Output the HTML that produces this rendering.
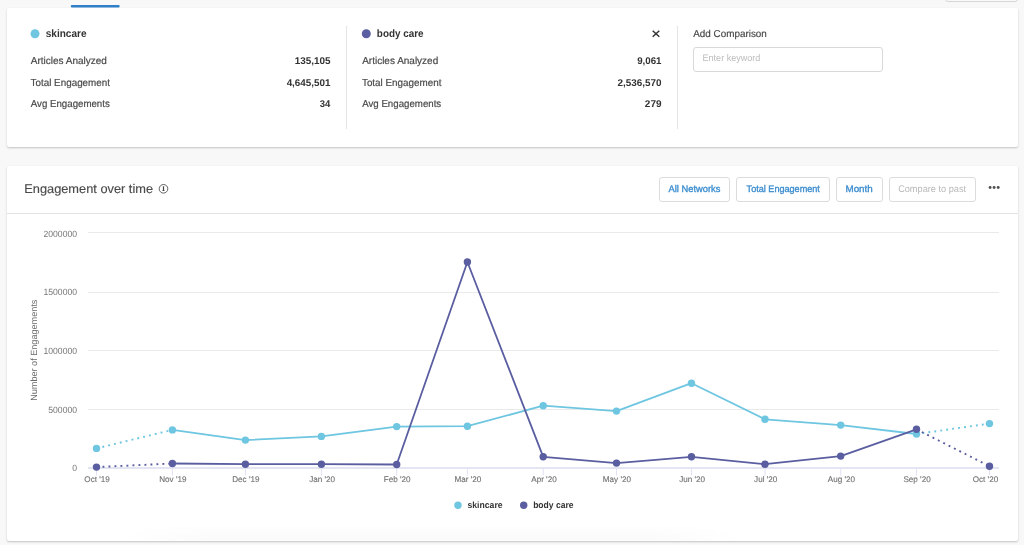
<!DOCTYPE html>
<html>
<head>
<meta charset="utf-8">
<style>
html,body{margin:0;padding:0;}
body{width:1024px;height:545px;overflow:hidden;background:#f8f8f8;position:relative;font-family:"Liberation Sans",sans-serif;}
.card{position:absolute;left:7px;width:1011px;background:#fff;border-radius:2px;box-shadow:0 1px 2px rgba(0,0,0,0.22);}
#c1{top:8px;height:139px;}
#c2{top:166px;height:375px;}
#tab{position:absolute;left:71px;top:5px;width:49px;height:2px;background:#2f7fc6;border-radius:1px;}
#topbtn{position:absolute;left:945px;top:-24px;width:71px;height:24px;border:1px solid #d6d6d6;border-radius:3px;background:#f9f9f9;}
.btn{position:absolute;top:177px;height:25px;border:1px solid #dcdcdc;border-radius:3px;background:#fff;box-sizing:border-box;}
#inp{position:absolute;left:693px;top:47px;width:190px;height:25px;border:1px solid #d9d9d9;border-radius:3px;box-sizing:border-box;background:#fff;}
#hdrline{position:absolute;left:7px;top:213px;width:1011px;height:1px;background:#e3e3e3;}
svg{position:absolute;left:0;top:0;will-change:transform;}
text{font-family:"Liberation Sans",sans-serif;text-rendering:geometricPrecision;}
</style>
</head>
<body>
<div id="topbtn"></div>
<div class="card" id="c1"></div>
<div class="card" id="c2"></div>
<div id="inp"></div>
<div id="hdrline"></div>
<div style="position:absolute;left:120px;top:525px;width:620px;height:15px;background:linear-gradient(to bottom,rgba(0,0,0,0),rgba(0,0,0,0.018));-webkit-mask-image:linear-gradient(to right,transparent,#000 15%,#000 85%,transparent);"></div>
<div class="btn" style="left:659px;width:71px;"></div>
<div class="btn" style="left:736px;width:94px;"></div>
<div class="btn" style="left:836px;width:47px;"></div>
<div class="btn" style="left:889px;width:87px;"></div>
<svg width="1024" height="545" viewBox="0 0 1024 545">
<rect x="70.8" y="5.1" width="48.8" height="2.4" rx="1" fill="#2f80c8"/>
<circle cx="35" cy="33.8" r="4.5" fill="#6ec6e1"/>
<circle cx="366.3" cy="33.8" r="4.5" fill="#5a5ea0"/>
<rect x="346" y="26" width="1" height="103" fill="#e5e5e5"/>
<rect x="677" y="26" width="1" height="103" fill="#e5e5e5"/>
<path d="M652.7 30.7 L659.3 36.8 M659.3 30.7 L652.7 36.8" stroke="#333" stroke-width="1.5" fill="none"/>
<circle cx="163.5" cy="188.8" r="4.3" fill="none" stroke="#585858" stroke-width="0.95"/>
<path d="M162.9 186.3 H164.1 V190.2 H164.6 V191.1 H162.4 V190.2 H162.9 Z" fill="#444"/>
<g fill="#505050"><circle cx="990.1" cy="187.5" r="1.45"/><circle cx="994.1" cy="187.5" r="1.45"/><circle cx="998.2" cy="187.5" r="1.45"/></g>
<g fill="#eaeaea"><rect x="88" y="232" width="911" height="1"/><rect x="88" y="292" width="911" height="1"/><rect x="88" y="350" width="911" height="1"/><rect x="88" y="409" width="911" height="1"/></g>
<rect x="88" y="467" width="911" height="2" fill="#e3e6f2"/>
<g fill="#dfe2f1"><rect x="96.0" y="469" width="1" height="6.5"/><rect x="171.9" y="469" width="1" height="6.5"/><rect x="244.9" y="469" width="1" height="6.5"/><rect x="320.9" y="469" width="1" height="6.5"/><rect x="396.2" y="469" width="1" height="6.5"/><rect x="466.9" y="469" width="1" height="6.5"/><rect x="542.7" y="469" width="1" height="6.5"/><rect x="616.0" y="469" width="1" height="6.5"/><rect x="691.0" y="469" width="1" height="6.5"/><rect x="764.5" y="469" width="1" height="6.5"/><rect x="840.2" y="469" width="1" height="6.5"/><rect x="916.0" y="469" width="1" height="6.5"/><rect x="989.0" y="469" width="1" height="6.5"/></g>
<text x="45.75" y="36.9" font-size="10.8" font-weight="bold" fill="#333" textLength="40.79" lengthAdjust="spacingAndGlyphs">skincare</text><text x="30.78" y="63.8" font-size="10.2" fill="#4a4a4a" stroke="#4a4a4a" stroke-width="0.2" textLength="76.05" lengthAdjust="spacingAndGlyphs">Articles Analyzed</text><text x="362.18" y="63.8" font-size="10.2" fill="#4a4a4a" stroke="#4a4a4a" stroke-width="0.2" textLength="76.05" lengthAdjust="spacingAndGlyphs">Articles Analyzed</text><text x="30.58" y="85.6" font-size="10.2" fill="#4a4a4a" stroke="#4a4a4a" stroke-width="0.2" textLength="79.41" lengthAdjust="spacingAndGlyphs">Total Engagement</text><text x="361.98" y="85.6" font-size="10.2" fill="#4a4a4a" stroke="#4a4a4a" stroke-width="0.2" textLength="79.41" lengthAdjust="spacingAndGlyphs">Total Engagement</text><text x="30.78" y="106.8" font-size="10.2" fill="#4a4a4a" stroke="#4a4a4a" stroke-width="0.2" textLength="79.05" lengthAdjust="spacingAndGlyphs">Avg Engagements</text><text x="362.18" y="106.8" font-size="10.2" fill="#4a4a4a" stroke="#4a4a4a" stroke-width="0.2" textLength="79.05" lengthAdjust="spacingAndGlyphs">Avg Engagements</text><text x="294.68" y="63.8" font-size="9.8" font-weight="bold" fill="#333" textLength="35.82" lengthAdjust="spacingAndGlyphs">135,105</text><text x="286.65" y="85.6" font-size="9.8" font-weight="bold" fill="#333" textLength="43.83" lengthAdjust="spacingAndGlyphs">4,645,501</text><text x="319.70" y="106.8" font-size="9.8" font-weight="bold" fill="#333" textLength="10.57" lengthAdjust="spacingAndGlyphs">34</text><text x="376.86" y="36.9" font-size="10.8" font-weight="bold" fill="#333" textLength="46.68" lengthAdjust="spacingAndGlyphs">body care</text><text x="637.16" y="63.8" font-size="9.8" font-weight="bold" fill="#333" textLength="24.31" lengthAdjust="spacingAndGlyphs">9,061</text><text x="617.55" y="85.6" font-size="9.8" font-weight="bold" fill="#333" textLength="44.06" lengthAdjust="spacingAndGlyphs">2,536,570</text><text x="644.85" y="106.8" font-size="9.8" font-weight="bold" fill="#333" textLength="16.71" lengthAdjust="spacingAndGlyphs">279</text><text x="693.28" y="36.9" font-size="10" fill="#454545" stroke="#454545" stroke-width="0.15" textLength="73.55" lengthAdjust="spacingAndGlyphs">Add Comparison</text><text x="702.55" y="61.1" font-size="9.5" fill="#bcbcbc" textLength="57.83" lengthAdjust="spacingAndGlyphs">Enter keyword</text><text x="24.24" y="193.3" font-size="12.6" fill="#4a4a4a" stroke="#4a4a4a" stroke-width="0.15" textLength="128.82" lengthAdjust="spacingAndGlyphs">Engagement over time</text><text x="668.58" y="191.9" font-size="9.6" fill="#3d8ecf" stroke="#3d8ecf" stroke-width="0.35" textLength="51.84" lengthAdjust="spacingAndGlyphs">All Networks</text><text x="746.60" y="191.9" font-size="9.6" fill="#3d8ecf" stroke="#3d8ecf" stroke-width="0.35" textLength="73.28" lengthAdjust="spacingAndGlyphs">Total Engagement</text><text x="845.49" y="191.9" font-size="9.6" fill="#3d8ecf" stroke="#3d8ecf" stroke-width="0.35" textLength="27.24" lengthAdjust="spacingAndGlyphs">Month</text><text x="898.14" y="191.9" font-size="9.6" fill="#b8b8b8" textLength="67.93" lengthAdjust="spacingAndGlyphs">Compare to past</text><text x="43.47" y="236.74" font-size="9.0" fill="#777" textLength="33.56" lengthAdjust="spacingAndGlyphs">2000000</text><text x="43.47" y="295.34" font-size="9.0" fill="#777" textLength="33.56" lengthAdjust="spacingAndGlyphs">1500000</text><text x="43.47" y="353.99" font-size="9.0" fill="#777" textLength="33.56" lengthAdjust="spacingAndGlyphs">1000000</text><text x="48.27" y="412.54" font-size="9.0" fill="#777" textLength="28.77" lengthAdjust="spacingAndGlyphs">500000</text><text x="72.24" y="471.49" font-size="9.0" fill="#777" textLength="4.79" lengthAdjust="spacingAndGlyphs">0</text><text x="84.36" y="481.8" font-size="8.2" fill="#707070" stroke="#707070" stroke-width="0.12" textLength="25.46" lengthAdjust="spacingAndGlyphs">Oct '19</text><text x="159.22" y="481.8" font-size="8.2" fill="#707070" stroke="#707070" stroke-width="0.12" textLength="27.27" lengthAdjust="spacingAndGlyphs">Nov '19</text><text x="232.22" y="481.8" font-size="8.2" fill="#707070" stroke="#707070" stroke-width="0.12" textLength="27.27" lengthAdjust="spacingAndGlyphs">Dec '19</text><text x="309.13" y="481.8" font-size="8.2" fill="#707070" stroke="#707070" stroke-width="0.12" textLength="25.92" lengthAdjust="spacingAndGlyphs">Jan '20</text><text x="383.71" y="481.8" font-size="8.2" fill="#707070" stroke="#707070" stroke-width="0.12" textLength="26.82" lengthAdjust="spacingAndGlyphs">Feb '20</text><text x="454.41" y="481.8" font-size="8.2" fill="#707070" stroke="#707070" stroke-width="0.12" textLength="26.82" lengthAdjust="spacingAndGlyphs">Mar '20</text><text x="531.22" y="481.8" font-size="8.2" fill="#707070" stroke="#707070" stroke-width="0.12" textLength="25.47" lengthAdjust="spacingAndGlyphs">Apr '20</text><text x="602.83" y="481.8" font-size="8.2" fill="#707070" stroke="#707070" stroke-width="0.12" textLength="28.17" lengthAdjust="spacingAndGlyphs">May '20</text><text x="679.23" y="481.8" font-size="8.2" fill="#707070" stroke="#707070" stroke-width="0.12" textLength="25.92" lengthAdjust="spacingAndGlyphs">Jun '20</text><text x="754.09" y="481.8" font-size="8.2" fill="#707070" stroke="#707070" stroke-width="0.12" textLength="23.21" lengthAdjust="spacingAndGlyphs">Jul '20</text><text x="827.80" y="481.8" font-size="8.2" fill="#707070" stroke="#707070" stroke-width="0.12" textLength="27.28" lengthAdjust="spacingAndGlyphs">Aug '20</text><text x="903.43" y="481.8" font-size="8.2" fill="#707070" stroke="#707070" stroke-width="0.12" textLength="27.28" lengthAdjust="spacingAndGlyphs">Sep '20</text><text x="972.73" y="481.8" font-size="8.2" fill="#707070" stroke="#707070" stroke-width="0.12" textLength="25.46" lengthAdjust="spacingAndGlyphs">Oct '20</text><text x="467.50" y="508.4" font-size="9.1" font-weight="bold" fill="#333" textLength="35.09" lengthAdjust="spacingAndGlyphs">skincare</text><text x="533.14" y="508.4" font-size="9.1" font-weight="bold" fill="#333" textLength="40.45" lengthAdjust="spacingAndGlyphs">body care</text>
<text transform="translate(36.6 400.85) rotate(-90)" font-size="9" fill="#6a6a6a" textLength="101.27" lengthAdjust="spacingAndGlyphs">Number of Engagements</text>
<g><polyline points="172.4,429.9 245.4,440.1 321.4,436.4 396.7,426.6 467.4,426.2 543.2,405.7 616.5,411.1 691.5,383.2 765.0,419.3 840.7,425.1 916.5,434.0" fill="none" stroke="#6ec6e1" stroke-width="1.8" stroke-linejoin="round"/><polyline points="96.5,448.4 172.4,429.9" fill="none" stroke="#6ec6e1" stroke-width="1.9" stroke-dasharray="1.9 4.1"/><polyline points="916.5,434.0 989.5,423.6" fill="none" stroke="#6ec6e1" stroke-width="1.9" stroke-dasharray="1.9 4.1"/><polyline points="172.4,463.5 245.4,464.2 321.4,464.2 396.7,464.5 467.4,262.0 543.2,456.8 616.5,463.1 691.5,456.8 765.0,464.2 840.7,456.1 916.5,429.3" fill="none" stroke="#5a5ea0" stroke-width="1.8" stroke-linejoin="round"/><polyline points="96.5,467.1 172.4,463.5" fill="none" stroke="#5a5ea0" stroke-width="1.9" stroke-dasharray="1.9 4.1"/><polyline points="916.5,429.3 989.5,466.2" fill="none" stroke="#5a5ea0" stroke-width="1.9" stroke-dasharray="1.9 4.1"/><circle cx="96.5" cy="448.4" r="3.7" fill="#6ec6e1"/><circle cx="172.4" cy="429.9" r="3.7" fill="#6ec6e1"/><circle cx="245.4" cy="440.1" r="3.7" fill="#6ec6e1"/><circle cx="321.4" cy="436.4" r="3.7" fill="#6ec6e1"/><circle cx="396.7" cy="426.6" r="3.7" fill="#6ec6e1"/><circle cx="467.4" cy="426.2" r="3.7" fill="#6ec6e1"/><circle cx="543.2" cy="405.7" r="3.7" fill="#6ec6e1"/><circle cx="616.5" cy="411.1" r="3.7" fill="#6ec6e1"/><circle cx="691.5" cy="383.2" r="3.7" fill="#6ec6e1"/><circle cx="765.0" cy="419.3" r="3.7" fill="#6ec6e1"/><circle cx="840.7" cy="425.1" r="3.7" fill="#6ec6e1"/><circle cx="916.5" cy="434.0" r="3.7" fill="#6ec6e1"/><circle cx="989.5" cy="423.6" r="3.7" fill="#6ec6e1"/><circle cx="96.5" cy="467.1" r="3.7" fill="#5a5ea0"/><circle cx="172.4" cy="463.5" r="3.7" fill="#5a5ea0"/><circle cx="245.4" cy="464.2" r="3.7" fill="#5a5ea0"/><circle cx="321.4" cy="464.2" r="3.7" fill="#5a5ea0"/><circle cx="396.7" cy="464.5" r="3.7" fill="#5a5ea0"/><circle cx="467.4" cy="262.0" r="3.7" fill="#5a5ea0"/><circle cx="543.2" cy="456.8" r="3.7" fill="#5a5ea0"/><circle cx="616.5" cy="463.1" r="3.7" fill="#5a5ea0"/><circle cx="691.5" cy="456.8" r="3.7" fill="#5a5ea0"/><circle cx="765.0" cy="464.2" r="3.7" fill="#5a5ea0"/><circle cx="840.7" cy="456.1" r="3.7" fill="#5a5ea0"/><circle cx="916.5" cy="429.3" r="3.7" fill="#5a5ea0"/><circle cx="989.5" cy="466.2" r="3.7" fill="#5a5ea0"/></g>
<circle cx="458" cy="505.3" r="3.7" fill="#6ec6e1"/>
<circle cx="523.7" cy="505.3" r="3.7" fill="#5a5ea0"/>
</svg>
</body>
</html>
